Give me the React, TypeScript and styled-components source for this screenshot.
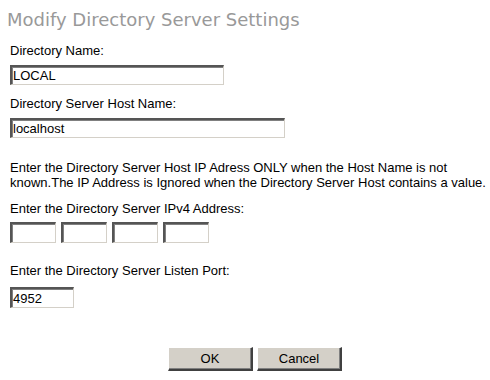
import styled, { createGlobalStyle } from 'styled-components';

const GlobalStyle = createGlobalStyle`
    body {
        margin: 0;
        background: #ffffff;
        font-family: "Liberation Sans", Arial, sans-serif;
        color: #000000;
    }
`;

const Page = styled.div`
    width: 490px;
    padding-top: 10px;
`;

const Title = styled.h1`
    margin: 0 0 13px 7px;
    font-family: "DejaVu Sans", Verdana, sans-serif;
    font-size: 18px;
    line-height: 20px;
    font-weight: normal;
    color: #999999;
`;

const Form = styled.form`
    display: flex;
    flex-direction: column;
    align-items: flex-start;
    padding-left: 10px;
`;

const Label = styled.label<{ $gap?: number }>`
    display: block;
    margin-top: ${p => p.$gap ?? 0}px;
    font-size: 13px;
    line-height: 15px;
`;

const Note = styled.p`
    margin: 22px 0 0 0;
    font-size: 13px;
    line-height: 15px;
    width: 480px;
`;

const TextInput = styled.input<{ $width: number; $height?: number; $gap?: number }>`
    box-sizing: border-box;
    width: ${p => p.$width}px;
    height: ${p => p.$height ?? 20}px;
    margin: ${p => p.$gap ?? 7}px 0 0 0;
    padding: 0 1px;
    font-family: "Liberation Sans", Arial, sans-serif;
    font-size: 13px;
    color: #000000;
    background: #ffffff;
    border-style: solid;
    border-width: 2px 1px 1px 2px;
    border-color: #555555 #d4d0c8 #d4d0c8 #555555;
    box-shadow: inset 1px 1px 0 #808080;
    outline: none;
`;

const IpRow = styled.div`
    display: flex;
    gap: 5px;
    margin-top: 6px;
`;

const IpInput = styled(TextInput)`
    margin: 0;
`;

const Buttons = styled.div`
    display: flex;
    justify-content: center;
    gap: 4px;
    margin-top: 39px;
    padding-left: 20px;
`;

const Button = styled.button`
    box-sizing: border-box;
    width: 85px;
    height: 24px;
    padding: 0;
    font-family: "Liberation Sans", Arial, sans-serif;
    font-size: 13px;
    color: #000000;
    background: #d4d0c8;
    border-style: solid;
    border-width: 1px 2px 2px 1px;
    border-color: #ffffff #404040 #404040 #ffffff;
    box-shadow: inset -1px -1px 0 #808080;
`;

export default function App() {
    return (
        <Page>
            <GlobalStyle />
            <Title>Modify Directory Server Settings</Title>
            <Form onSubmit={e => e.preventDefault()}>
                <Label>Directory Name:</Label>
                <TextInput $width={214} defaultValue="LOCAL" />
                <Label $gap={11}>Directory Server Host Name:</Label>
                <TextInput $width={275} defaultValue="localhost" />
                <Note>
                    Enter the Directory Server Host IP Adress ONLY when the Host Name is not
                    known.The IP Address is Ignored when the Directory Server Host contains a value.
                </Note>
                <Label $gap={11}>Enter the Directory Server IPv4 Address:</Label>
                <IpRow>
                    {[0, 1, 2, 3].map(i => (
                        <IpInput key={i} $width={46} $height={21} />
                    ))}
                </IpRow>
                <Label $gap={20}>Enter the Directory Server Listen Port:</Label>
                <TextInput $width={64} $height={21} $gap={9} defaultValue="4952" />
            </Form>
            <Buttons>
                <Button type="button">OK</Button>
                <Button type="button">Cancel</Button>
            </Buttons>
        </Page>
    );
}
